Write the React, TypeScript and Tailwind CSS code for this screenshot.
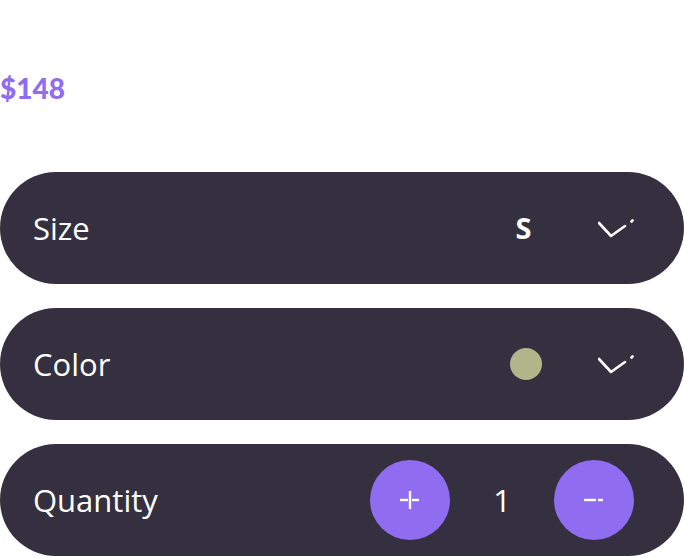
import React from "react";

function Chevron() {
  return (
    <svg width="36" height="24" viewBox="0 0 36 24" fill="none" className="shrink-0">
      <path d="M1 7 L13 20 L27 10" stroke="white" strokeWidth="2.6" strokeLinecap="round" strokeLinejoin="round" />
      <path d="M33.5 5.5 L34.5 4.5" stroke="white" strokeWidth="2.6" strokeLinecap="round" />
    </svg>
  );
}

function Row({ label, children }: { label: string; children: React.ReactNode }) {
  return (
    <div className="flex h-[112px] items-center justify-between rounded-full bg-[#35303f] pl-[33px] pr-[50px]">
      <span className="text-[31px] text-white">{label}</span>
      <div className="flex items-center">{children}</div>
    </div>
  );
}

export default function App() {
  return (
    <div className="w-[684px] bg-white font-['Open_Sans',sans-serif]">
      <div className="flex h-[172px] items-start pt-[70px]">
        <span className="font-['Lato',sans-serif] text-[28px] font-black leading-[36px] text-[#8f6cf0]">$148</span>
      </div>
      <div className="flex flex-col gap-6">
        <Row label="Size">
          <span className="w-[17px] text-center text-[29px] font-bold text-white">S</span>
          <div className="ml-[66px]">
            <Chevron />
          </div>
        </Row>
        <Row label="Color">
          <span className="h-8 w-8 rounded-full bg-[#b1b58a]" />
          <div className="ml-[56px]">
            <Chevron />
          </div>
        </Row>
        <Row label="Quantity">
          <button className="flex h-20 w-20 items-center justify-center rounded-full bg-[#8f6cf0]">
            <svg width="20" height="20" viewBox="0 0 20 20" fill="none">
              <path d="M0 10 H8" stroke="white" strokeWidth="2.4" />
              <path d="M10 1 V19" stroke="white" strokeWidth="2.4" />
              <path d="M12 10 H19" stroke="white" strokeWidth="2.4" />
            </svg>
          </button>
          <span className="w-[104px] text-center text-[31px] text-white">1</span>
          <button className="flex h-20 w-20 items-center justify-center rounded-full bg-[#8f6cf0]">
            <svg width="20" height="4" viewBox="0 0 20 4" fill="none">
              <path d="M0 2 H12" stroke="white" strokeWidth="2.4" />
              <path d="M14 2 H19" stroke="white" strokeWidth="2.4" />
            </svg>
          </button>
        </Row>
      </div>
    </div>
  );
}
